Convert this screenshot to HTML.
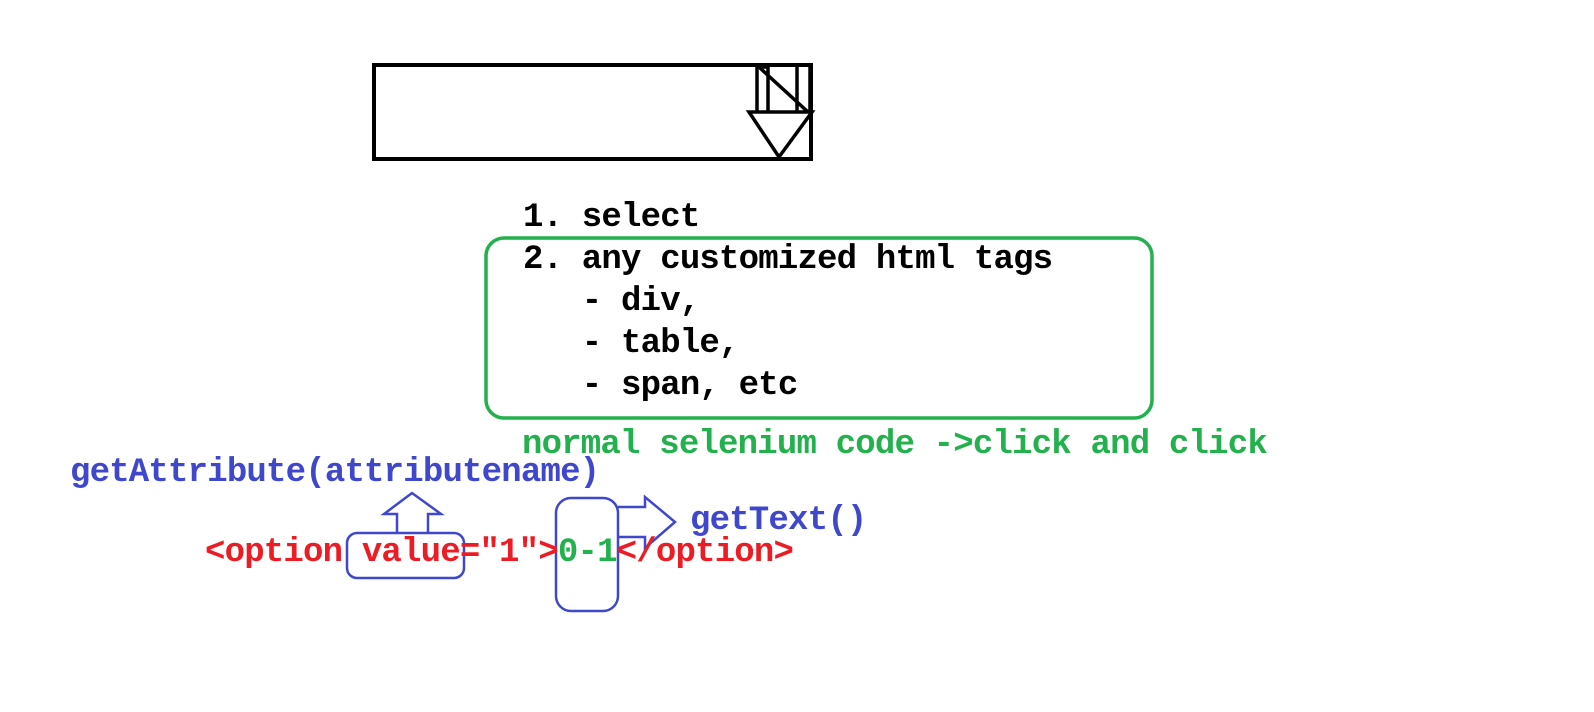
<!DOCTYPE html><html><head><style>
body{margin:0;width:1594px;height:712px;background:#fff;position:relative;overflow:hidden}
.t{position:absolute;font-family:"Liberation Mono",monospace;font-weight:bold;font-size:34px;letter-spacing:-0.8px;line-height:42px;white-space:pre}
svg{position:absolute;left:0;top:0}
</style></head><body>
<svg width="1594" height="712">
<rect x="374" y="65" width="437" height="94" fill="none" stroke="#000" stroke-width="4"/>
<path d="M757 67 V112 M768 67 V112 M757 67 H768 M760 68 L808 112 M797 67 V112 M810 67 V112 M749 112 H812 L779 157 Z M757 112 H749 M797 112 H812" fill="none" stroke="#000" stroke-width="3.5"/>
<rect x="486" y="238" width="666" height="180" rx="18" fill="none" stroke="#22b14c" stroke-width="3.5"/>
<g fill="none" stroke="#3f48cc" stroke-width="2.5">
<path d="M397 533 V514 H384 L412 493 L441 514 H428 V533"/>
<rect x="347" y="533" width="117" height="45" rx="10"/>
<rect x="556" y="498" width="62" height="113" rx="15"/>
<path d="M618 507 H645 V497 L675 522 L645 548 V537 H618"/>
</g>
</svg>
<div class="t" style="left:523px;top:197px;color:#000">1. select
2. any customized html tags
   - div,
   - table,
   - span, etc</div>
<div class="t" style="left:522px;top:424px;color:#22b14c">normal selenium code -&gt;click and click</div>
<div class="t" style="left:70px;top:452px;color:#3f48cc">getAttribute(attributename)</div>
<div class="t" style="left:690px;top:500px;color:#3f48cc">getText()</div>
<div class="t" style="left:205px;top:532px;color:#ed1c24">&lt;option value="1"&gt;<span style="color:#22b14c">0-1</span>&lt;/option&gt;</div>
</body></html>
